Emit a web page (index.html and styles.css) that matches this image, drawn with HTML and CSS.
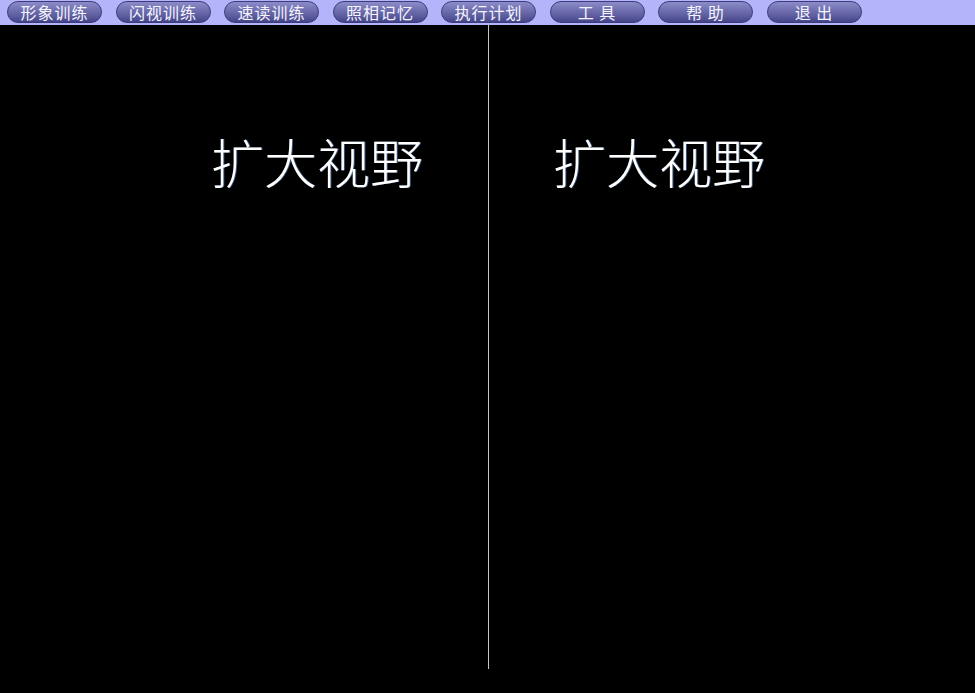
FILE: index.html
```html
<!DOCTYPE html>
<html lang="zh-CN">
<head>
<meta charset="utf-8">
<title>扩大视野</title>
<link rel="stylesheet" href="styles.css">
</head>
<body>
<nav class="menubar">
  <span class="btn">形象训练</span>
  <span class="btn">闪视训练</span>
  <span class="btn">速读训练</span>
  <span class="btn">照相记忆</span>
  <span class="btn">执行计划</span>
  <span class="btn">工 具</span>
  <span class="btn">帮 助</span>
  <span class="btn">退 出</span>
</nav>
<main class="stage">
  <section class="panel panel-left"><div class="word">扩大视野</div></section>
  <section class="panel panel-right"><div class="word">扩大视野</div></section>
</main>
</body>
</html>
```
FILE: styles.css
```css
html, body {
  margin: 0;
  padding: 0;
  background: #000;
  height: 100%;
  overflow: hidden;
}
.menubar {
  height: 25px;
  background: #b4b4fa;
  display: flex;
  align-items: flex-start;
  gap: 13.5px;
  padding: 1px 0 0 7px;
  box-sizing: border-box;
}
.btn {
  width: 95px;
  height: 22px;
  box-sizing: border-box;
  border-radius: 11px;
  border: 1px solid #3c3c7c;
  background: linear-gradient(to bottom, #8c8cca 0%, #7474b4 35%, #5c5c9e 70%, #44448a 100%);
  color: #f4f4ff;
  font-family: "Noto Sans CJK SC", sans-serif;
  font-size: 16px;
  line-height: 20px;
  text-align: center;
  letter-spacing: 1px;
  white-space: pre;
}
.stage {
  display: flex;
  height: 644px;
}
.panel {
  box-sizing: border-box;
  padding-top: 106px;
}
.panel-left {
  width: 489px;
  border-right: 1px solid #c8c8c8;
  padding-left: 211px;
}
.panel-right {
  flex: 1;
  padding-left: 64px;
}
.word {
  font-family: "Noto Sans CJK SC", sans-serif;
  font-weight: 300;
  font-size: 53px;
  line-height: 60px;
  color: #fff;
  white-space: nowrap;
  text-shadow: 1px 0 0 rgba(120,180,255,0.5);
}
```
